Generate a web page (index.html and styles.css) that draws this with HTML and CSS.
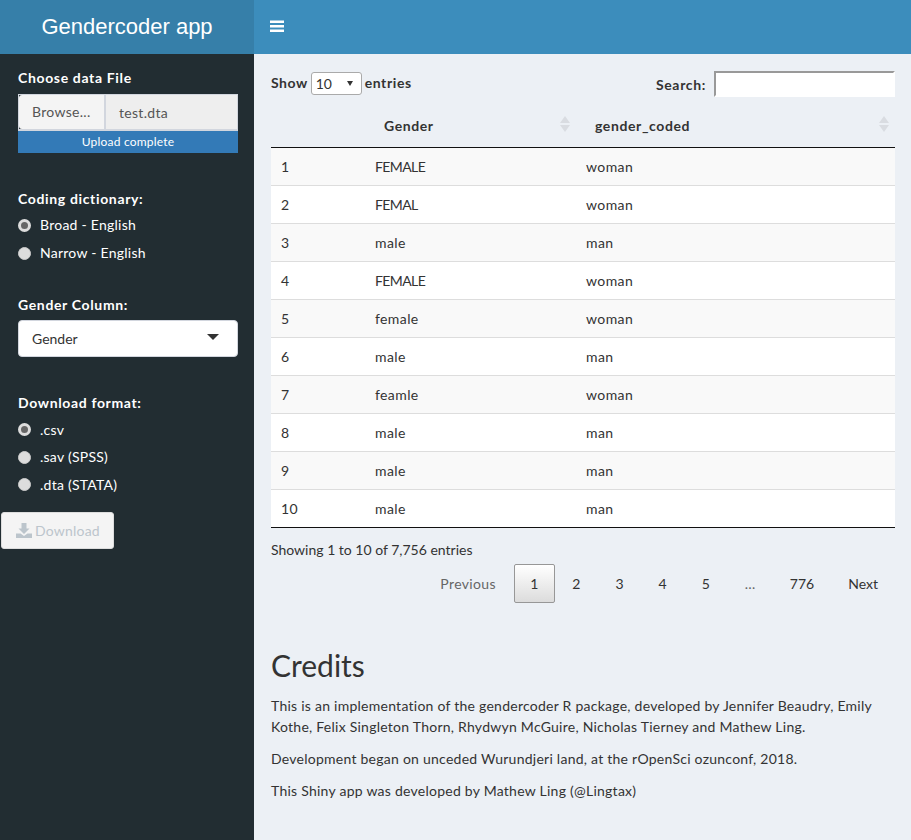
FILE: index.html
```html
<!DOCTYPE html>
<html>

<head>
    <meta charset="UTF-8">
    <title>Gendercoder app</title>
    <link rel="stylesheet" href="styles.css">
</head>

<body>
    <div class="layout">
        <aside class="sidebar">
            <div class="logo">Gendercoder app</div>
            <div class="sidebar-form">
                <div class="group group-file">
                    <div class="field-label">Choose data File</div>
                    <div class="file-row">
                        <span class="browse">Browse...</span>
                        <span class="file-name">test.dta</span>
                    </div>
                    <div class="progress">Upload complete</div>
                </div>
                <div class="group group-dict">
                    <div class="field-label">Coding dictionary:</div>
                    <div class="radio"><span class="dot checked"></span>Broad - English</div>
                    <div class="radio"><span class="dot"></span>Narrow - English</div>
                </div>
                <div class="group group-column">
                    <div class="field-label">Gender Column:</div>
                    <div class="select-box">
                        <span>Gender</span>
                        <span class="caret"></span>
                    </div>
                </div>
                <div class="group group-format">
                    <div class="field-label">Download format:</div>
                    <div class="radio"><span class="dot checked"></span>.csv</div>
                    <div class="radio"><span class="dot"></span>.sav (SPSS)</div>
                    <div class="radio"><span class="dot"></span>.dta (STATA)</div>
                </div>
            </div>
            <div class="download">
                <svg width="16" height="15" viewBox="0 0 16 15">
                    <path d="M5.5 0h5v5.500h3L8 11 2.500 5.500h3z" />
                    <path d="M0 10.500h4.500L8 13l3.500-2.500H16V15H0z" />
                </svg>
                Download
            </div>
        </aside>
        <main class="main">
            <header class="topbar">
                <svg class="burger" width="14" height="14" viewBox="0 0 14 14">
                    <path d="M0 1.500h14v2.400H0zM0 6h14v2.400H0zM0 10.500h14v2.400H0z" />
                </svg>
            </header>
            <div class="content">
                <div class="table-top">
                    <div class="length">
                        <span class="show-label">Show</span>
                        <span class="length-select">10<span class="mini-caret"></span></span>
                        entries
                    </div>
                    <div class="search">
                        <span class="search-label">Search:</span>
                        <span class="search-input"></span>
                    </div>
                </div>
                <table class="data">
                    <thead>
                        <tr>
                            <th class="col-id"></th>
                            <th class="col-gender">Gender<span class="sort"></span></th>
                            <th>gender_coded<span class="sort"></span></th>
                        </tr>
                    </thead>
                    <tbody>
                        <tr><td>1</td><td class="caps">FEMALE</td><td>woman</td></tr>
                        <tr><td>2</td><td class="caps">FEMAL</td><td>woman</td></tr>
                        <tr><td>3</td><td>male</td><td>man</td></tr>
                        <tr><td>4</td><td class="caps">FEMALE</td><td>woman</td></tr>
                        <tr><td>5</td><td>female</td><td>woman</td></tr>
                        <tr><td>6</td><td>male</td><td>man</td></tr>
                        <tr><td>7</td><td>feamle</td><td>woman</td></tr>
                        <tr><td>8</td><td>male</td><td>man</td></tr>
                        <tr><td>9</td><td>male</td><td>man</td></tr>
                        <tr><td>10</td><td>male</td><td>man</td></tr>
                    </tbody>
                </table>
                <div class="info">Showing 1 to 10 of 7,756 entries</div>
                <div class="pager">
                    <span class="page muted">Previous</span>
                    <span class="page current">1</span>
                    <span class="page num">2</span>
                    <span class="page num">3</span>
                    <span class="page num">4</span>
                    <span class="page num">5</span>
                    <span class="page dots">…</span>
                    <span class="page">776</span>
                    <span class="page">Next</span>
                </div>
                <h2 class="credits">Credits</h2>
                <p>This is an implementation of the gendercoder R package, developed by Jennifer Beaudry, Emily Kothe, Felix Singleton Thorn, Rhydwyn McGuire, Nicholas Tierney and Mathew Ling.</p>
                <p>Development began on unceded Wurundjeri land, at the rOpenSci ozunconf, 2018.</p>
                <p>This Shiny app was developed by Mathew Ling (@Lingtax)</p>
            </div>
        </main>
    </div>
</body>

</html>
```

FILE: styles.css
```css
* {
    box-sizing: border-box;
}

body {
    margin: 0;
    background-color: #ecf0f5;
    font-family: "Lato", "Noto Sans", sans-serif;
    font-size: 14px;
    line-height: 20px;
    color: #333;
}

.layout {
    display: flex;
    height: 840px;
    overflow: hidden;
}

/* sidebar */
.sidebar {
    width: 254px;
    flex-shrink: 0;
    background-color: #222d32;
    color: #fff;
}

.logo {
    height: 54px;
    background-color: #367fa9;
    font-family: "Liberation Sans", Arial, sans-serif;
    font-size: 22px;
    line-height: 54px;
    text-align: center;
}

.sidebar-form {
    padding: 14px 16px 0 18px;
}

.field-label {
    font-weight: 700;
    letter-spacing: 0.65px;
    height: 20px;
    margin-bottom: 6px;
}

.group-file {
    height: 121px;
}

.group-dict {
    height: 106px;
}

.group-column {
    height: 98px;
}

.group-format {
    height: 119px;
}

.file-row {
    display: flex;
    height: 37px;
    border: 1px solid #d2d6de;
    border-bottom-width: 2px;
    color: #555;
    letter-spacing: 0.3px;
}

.browse {
    width: 87px;
    background-color: #f4f4f4;
    border-right: 2px solid #d2d6de;
    padding: 7px 0 0 13px;
    border-radius: 3px 0 0 3px;
}

.file-name {
    flex: 1;
    background-color: #eee;
    padding: 8px 0 0 13px;
}

.progress {
    height: 22px;
    background-color: #337ab7;
    font-size: 12px;
    letter-spacing: 0.2px;
    line-height: 22px;
    text-align: center;
}

.radio {
    display: flex;
    align-items: center;
    height: 28px;
    letter-spacing: 0.25px;
}

.group-format .radio {
    height: 27.5px;
}

.dot {
    width: 13px;
    height: 13px;
    border-radius: 50%;
    background-color: #ddd;
    margin-right: 9px;
    border: 1px solid #ccc;
}

.dot.checked {
    background-color: #666;
    border: 3px solid #ddd;
}

.group-dict .field-label {
    margin-bottom: 2px;
}

.group-format .field-label {
    margin-bottom: 3px;
}

.group-column .field-label {
    margin-bottom: 5px;
}

.select-box {
    display: flex;
    justify-content: space-between;
    align-items: center;
    height: 37px;
    background-color: #fff;
    border: 1px solid #d2d6de;
    border-radius: 4px;
    color: #333;
    padding: 0 18px 0 13px;
}

.caret {
    width: 0;
    height: 0;
    border-left: 6px solid transparent;
    border-right: 6px solid transparent;
    border-top: 6px solid #333;
    margin-top: -3px;
}

.download {
    display: flex;
    align-items: center;
    gap: 3px;
    width: 113px;
    height: 37px;
    margin-left: 1px;
    padding-left: 14px;
    background-color: #f4f4f4;
    border: 1px solid #ddd;
    border-radius: 3px;
    color: #bcc5cc;
    letter-spacing: 0.2px;
}

.download svg {
    fill: #bcc5cc;
}

/* main */
.main {
    flex: 1;
    min-width: 0;
}

.topbar {
    height: 54px;
    background-color: #3c8dbc;
    padding: 19px 0 0 16px;
}

.burger {
    display: block;
    fill: #fff;
}

.content {
    padding: 17px 16px 0 17px;
}

.table-top {
    display: flex;
    justify-content: space-between;
    height: 43px;
    font-weight: 700;
    letter-spacing: 0.6px;
}

.length {
    display: flex;
    align-items: center;
    gap: 3px;
    height: 24px;
}

.show-label {
    letter-spacing: 0.5px;
}

.length-select {
    position: relative;
    display: block;
    width: 51px;
    height: 23px;
    background-color: #fff;
    border: 1px solid #aaa;
    border-radius: 3px;
    font-weight: 400;
    letter-spacing: 0;
    line-height: 21px;
    padding-left: 4px;
}

.mini-caret {
    position: absolute;
    right: 8px;
    top: 8px;
    border-left: 3px solid transparent;
    border-right: 3px solid transparent;
    border-top: 5px solid #333;
}

.search {
    display: flex;
    align-items: center;
    gap: 8px;
    height: 26px;
}

.search-label {
    letter-spacing: 0.65px;
    padding-top: 2px;
}

.search-input {
    display: block;
    width: 181px;
    height: 26px;
    background-color: #fff;
    border: 2px solid #fff;
    border-top-color: #999;
    border-left-color: #999;
}

.data {
    width: 624px;
    border-collapse: collapse;
    table-layout: fixed;
}

.data th {
    position: relative;
    height: 33px;
    padding: 0 0 8px 19px;
    text-align: left;
    font-weight: 700;
    letter-spacing: 0.6px;
    border-bottom: 1px solid #111;
}

.data .col-id {
    width: 94px;
}

.data .col-gender {
    width: 211px;
}

.sort {
    position: absolute;
    right: 6px;
    top: 2px;
    width: 10px;
    height: 16px;
}

.sort::before,
.sort::after {
    content: "";
    position: absolute;
    left: 0;
    border-left: 5px solid transparent;
    border-right: 5px solid transparent;
}

.sort::before {
    top: 0;
    border-bottom: 7px solid #d9dce1;
}

.sort::after {
    bottom: 0;
    border-top: 7px solid #d9dce1;
}

.data td {
    height: 38px;
    padding: 2px 10px 0;
    background-color: #fff;
    border-top: 1px solid #ddd;
    letter-spacing: 0.4px;
}

.data td.caps {
    letter-spacing: -0.6px;
}

.data tbody tr:nth-child(odd) td {
    background-color: #f9f9f9;
}

.data tbody tr:first-child td {
    border-top: none;
}

.data tbody tr:last-child td {
    background-color: #fff;
    border-bottom: 1px solid #111;
}

.info {
    margin-top: 12px;
}

.pager {
    display: flex;
    justify-content: flex-end;
    align-items: center;
    height: 39px;
    margin-top: 4px;
}

.page {
    padding: 2px 17px 0;
    text-align: center;
}

.page.num {
    padding: 2px 17.5px 0;
}

.page.muted {
    color: #666;
    padding-right: 18px;
    letter-spacing: 0.35px;
}

.page.current {
    width: 41px;
    height: 39px;
    padding: 0;
    line-height: 38px;
    background: linear-gradient(#fff, #dcdcdc);
    border: 1px solid #979797;
    border-radius: 2px;
}

.page.dots {
    color: #666;
    padding: 2px 17.5px 0;
}

.credits {
    margin: 46px 0 13px;
    font-size: 30px;
    font-weight: 400;
    line-height: 33px;
}

.content p {
    margin: 0 0 11px;
    line-height: 21px;
    letter-spacing: 0.25px;
}
```
